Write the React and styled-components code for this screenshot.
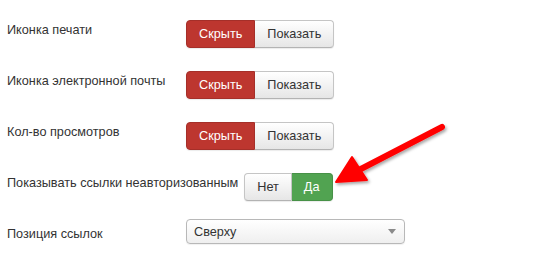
import React from "react";
import styled, { createGlobalStyle } from "styled-components";

const GlobalStyle = createGlobalStyle`
  html, body {
    margin: 0;
    padding: 0;
    background: #fff;
  }
  body {
    font-family: "Liberation Sans", Arial, Helvetica, sans-serif;
    font-size: 12.7px;
    color: #333;
  }
`;

const ROWS = [
  { label: "Иконка печати", type: "toggle", options: ["Скрыть", "Показать"], active: 0, tone: "danger" },
  { label: "Иконка электронной почты", type: "toggle", options: ["Скрыть", "Показать"], active: 0, tone: "danger" },
  { label: "Кол-во просмотров", type: "toggle", options: ["Скрыть", "Показать"], active: 0, tone: "danger" },
  { label: "Показывать ссылки неавторизованным", type: "toggle", options: ["Нет", "Да"], active: 1, tone: "success" },
  { label: "Позиция ссылок", type: "select", value: "Сверху" },
];

const TONES = {
  danger: { bg: "#bd362f", border: "#a52f29" },
  success: { bg: "#51a351", border: "#479147" },
};

const App = () => {
  return (
    <Page>
      <GlobalStyle />
      <Form>
        {ROWS.map((row, i) => (
          <Row key={i}>
            <Label>{row.label}</Label>
            {row.type === "toggle" ? (
              <ButtonGroup>
                {row.options.map((opt, j) => (
                  <GroupButton
                    key={j}
                    $active={j === row.active}
                    $tone={row.tone}
                  >
                    {opt}
                  </GroupButton>
                ))}
              </ButtonGroup>
            ) : (
              <Select>
                <span>{row.value}</span>
                <Caret />
              </Select>
            )}
          </Row>
        ))}
      </Form>
      <Arrow width="538" height="254" viewBox="0 0 538 254">
        <defs>
          <filter id="shadow" x="-20%" y="-20%" width="140%" height="140%">
            <feDropShadow dx="1.5" dy="2" stdDeviation="1.6" floodColor="#000" floodOpacity="0.35" />
          </filter>
        </defs>
        <g filter="url(#shadow)" fill="#ff0000" stroke="#ff0000">
          <line x1="442" y1="127" x2="357" y2="171" strokeWidth="6" strokeLinecap="round" />
          <polygon points="336,182 352,157 367,180" strokeWidth="2" strokeLinejoin="round" />
        </g>
      </Arrow>
    </Page>
  );
};

const Page = styled.div`
  position: relative;
  width: 538px;
  height: 254px;
  overflow: hidden;
`;

const Form = styled.div`
  display: flex;
  flex-direction: column;
  gap: 23px;
  padding: 20px 0 0 7px;
`;

const Row = styled.div`
  display: flex;
  align-items: flex-start;
`;

const Label = styled.div`
  min-width: 173px;
  padding: 1px 6px 0 0;
  line-height: 18px;
  white-space: nowrap;
`;

const ButtonGroup = styled.div`
  display: flex;
  height: 28px;
  border-radius: 4px;
  box-shadow: 0 1px 1px rgba(0, 0, 0, 0.08);
`;

const GroupButton = styled.div`
  display: flex;
  align-items: center;
  box-sizing: border-box;
  height: 28px;
  padding: 0 12px;
  border: 1px solid ${({ $active, $tone }) => ($active ? TONES[$tone].border : "#c5c5c5")};
  border-bottom-color: ${({ $active, $tone }) => ($active ? TONES[$tone].border : "#b3b3b3")};
  background: ${({ $active, $tone }) =>
    $active ? TONES[$tone].bg : "linear-gradient(#ffffff, #e6e6e6)"};
  color: ${({ $active }) => ($active ? "#fff" : "#333")};
  font-size: 12.7px;
  cursor: pointer;
  &:first-child {
    border-radius: 4px 0 0 4px;
  }
  &:last-child {
    border-radius: 0 4px 4px 0;
    border-left: none;
  }
`;

const Select = styled.div`
  display: flex;
  align-items: center;
  justify-content: space-between;
  box-sizing: border-box;
  width: 219px;
  height: 25px;
  margin-top: -5px;
  padding: 0 8px 0 7px;
  border: 1px solid #b8b8b8;
  border-radius: 4px;
  background: linear-gradient(#ffffff, #efefef);
  box-shadow: 0 1px 1px rgba(0, 0, 0, 0.06);
  color: #333;
  font-size: 12.7px;
`;

const Caret = styled.span`
  width: 0;
  height: 0;
  border-left: 4px solid transparent;
  border-right: 4px solid transparent;
  border-top: 5px solid #8a8a8a;
`;

const Arrow = styled.svg`
  position: absolute;
  left: 0;
  top: 0;
  pointer-events: none;
`;

export default App;
